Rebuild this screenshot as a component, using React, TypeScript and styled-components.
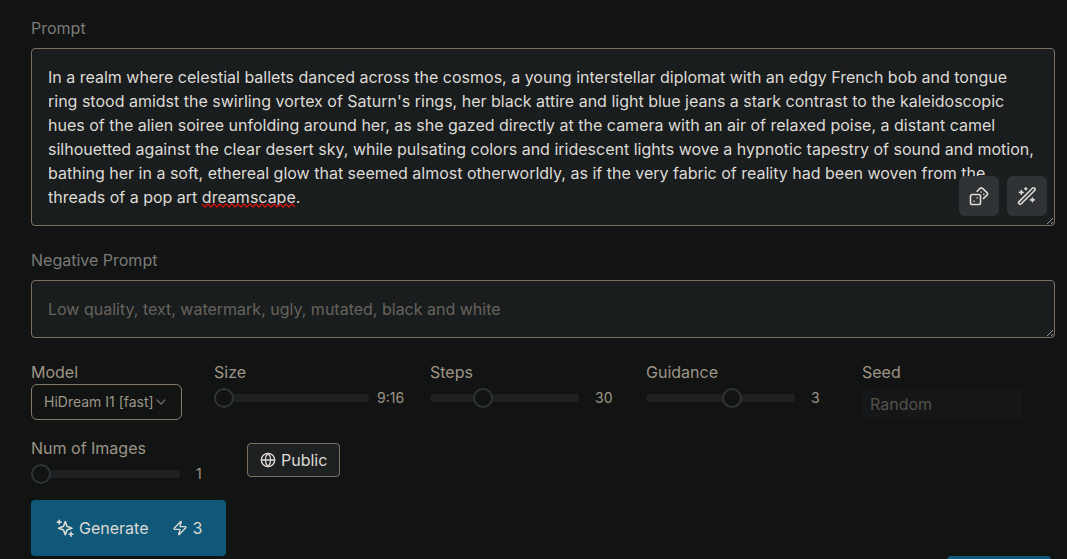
import React, { useState } from 'react';
import styled, { createGlobalStyle } from 'styled-components';
import { ChevronDown, Globe, Zap } from 'lucide-react';

const GlobalStyle = createGlobalStyle`
  *, *::before, *::after { box-sizing: border-box; }
  body {
    margin: 0;
    background: #111413;
    color: #9d9487;
    font-family: Inter, "Liberation Sans", sans-serif;
    font-size: 16px;
    line-height: 24px;
  }
  button, input, textarea, select { font: inherit; color: inherit; margin: 0; }
`;

const Form = styled.form`
  display: flex;
  flex-direction: column;
  padding: 16px 12px 3px 31px;
`;

const Field = styled.div`
  display: flex;
  flex-direction: column;
  margin-bottom: 22px;
`;

const FieldLabel = styled.label`
  color: #7b7a77;
  margin-bottom: 8px;
`;

const AreaWrap = styled.div`
  position: relative;
  display: flex;
`;

const Area = styled.textarea`
  flex: 1;
  min-width: 0;
  padding: 16px;
  border: 1px solid #7b7163;
  border-radius: 4px;
  background: #1a1d1e;
  color: #dddad5;
  color-scheme: dark;
  outline: none;
  overflow: hidden;
  resize: vertical;
  &::placeholder { color: #66635d; opacity: 1; }
`;

const Squiggle = styled.svg`
  position: absolute;
  left: 171px;
  top: 155px;
  pointer-events: none;
`;

const AreaTools = styled.div`
  position: absolute;
  right: 8px;
  bottom: 10px;
  display: flex;
  gap: 8px;
`;

const ToolButton = styled.button`
  display: grid;
  place-items: center;
  width: 40px;
  height: 40px;
  padding: 0;
  border: 0;
  border-radius: 6px;
  background: #303336;
  color: #dddad5;
`;

const Controls = styled.div`
  display: flex;
  flex-wrap: wrap;
  align-items: flex-start;
  gap: 16px 32px;
`;

const Control = styled.div<{ $width: number }>`
  display: flex;
  flex-direction: column;
  width: ${(p) => p.$width}px;
`;

const SelectBox = styled.div`
  position: relative;
  display: flex;
  svg {
    position: absolute;
    right: 13px;
    top: 10px;
    color: #6f695f;
    pointer-events: none;
  }
`;

const Select = styled.select`
  appearance: none;
  width: 100%;
  height: 36px;
  padding: 0 12px;
  border: 1px solid #84796a;
  border-radius: 6px;
  background: transparent;
  font-size: 14px;
`;

const SliderRow = styled.div<{ $gap: number }>`
  display: flex;
  align-items: center;
  gap: ${(p) => p.$gap}px;
  height: 20px;
  margin-top: 4px;
  font-size: 14px;
  white-space: nowrap;
`;

const Range = styled.input<{ $width: number }>`
  appearance: none;
  flex: none;
  width: ${(p) => p.$width}px;
  height: 20px;
  background: transparent;
  &::-webkit-slider-runnable-track {
    height: 8px;
    border-radius: 4px;
    background: #1e2122;
  }
  &::-webkit-slider-thumb {
    appearance: none;
    width: 20px;
    height: 20px;
    margin-top: -6px;
    border: 2px solid #2e3437;
    border-radius: 50%;
    background: #111413;
  }
`;

const SeedInput = styled.input`
  width: 100%;
  height: 32px;
  margin-top: 4px;
  padding: 0 8px;
  border: 0;
  background: #141617;
  &::placeholder { color: #55524d; opacity: 1; }
`;

const PublicButton = styled.button`
  display: flex;
  align-items: center;
  align-self: center;
  gap: 5px;
  height: 34px;
  padding: 0 12px;
  border: 1px solid #7b7163;
  border-radius: 4px;
  background: #1e2122;
  color: #dddad5;
`;

const GenerateButton = styled.button`
  display: flex;
  align-items: center;
  align-self: flex-start;
  gap: 24px;
  height: 56px;
  margin-top: 16px;
  padding: 0 24px;
  border: 0;
  border-radius: 4px;
  background: #0f5879;
  color: #dddad5;
`;

const IconText = styled.span`
  display: flex;
  align-items: center;
  gap: 4px;
`;

const FloatingButton = styled.button`
  position: fixed;
  right: 16px;
  bottom: -37px;
  width: 104px;
  height: 40px;
  border: 0;
  border-radius: 4px;
  background: #0f5879;
`;

const LineIcon = styled.svg.attrs({
  width: 20,
  height: 20,
  viewBox: '0 0 20 20',
  fill: 'none',
  stroke: 'currentColor',
  strokeLinecap: 'round',
  strokeLinejoin: 'round',
  'aria-hidden': true,
})`
  stroke-width: 1.6;
`;

const DiceIcon = () => (
  <LineIcon>
    <rect x="1.5" y="8.5" width="10" height="10" rx="1.8" />
    <path d="M8.2 5.2 L11 2.4 a1.8 1.8 0 0 1 2.5 0 L18 6.6 a1.8 1.8 0 0 1 0 2.5 L14.6 12.4" />
    <path d="M5 15.2h.01M8.2 12h.01M12.2 6h.01M14.8 8.4h.01" />
  </LineIcon>
);

const WandIcon = () => (
  <LineIcon>
    <path d="M2.1 15.6 L15.4 2.3 a1.5 1.5 0 0 1 2.2 2.2 L4.3 17.8 a1.5 1.5 0 0 1 -2.2 -2.2 Z" />
    <path d="M4.3 4.6v3.6M2.5 6.4h3.6M15.4 12v3.8M13.5 13.9h3.8M8.8 1.7v2M7.8 2.7h2" />
  </LineIcon>
);

const SparkleIcon = () => (
  <LineIcon>
    <path d="M10.3 3.6 L11.8 7.9 Q12 8.4 12.5 8.6 L17 10.2 L12.5 11.8 Q12 12 11.8 12.5 L10.3 16.8 L8.7 12.5 Q8.5 12 8 11.8 L3.5 10.2 L8 8.6 Q8.5 8.4 8.7 7.9 Z" />
    <path d="M4.2 2.2v3.8M2.3 4.1h3.8M16 14.4v3.8M14.1 16.3h3.8" />
  </LineIcon>
);

const PROMPT =
  "In a realm where celestial ballets danced across the cosmos, a young interstellar diplomat with an edgy French bob and tongue ring stood amidst the swirling vortex of Saturn's rings, her black attire and light blue jeans a stark contrast to the kaleidoscopic hues of the alien soiree unfolding around her, as she gazed directly at the camera with an air of relaxed poise, a distant camel silhouetted against the clear desert sky, while pulsating colors and iridescent lights wove a hypnotic tapestry of sound and motion, bathing her in a soft, ethereal glow that seemed almost otherworldly, as if the very fabric of reality had been woven from the threads of a pop art dreamscape.";

const SIZES = ['9:16', '2:3', '1:1', '3:2', '16:9'];

const squigglePoints = Array.from({ length: 32 }, (_, i) => `${i * 3},${i % 2 ? 4 : 1}`).join(' ');

type SliderProps = {
  id: string;
  label: string;
  min: number;
  max: number;
  step?: number;
  initial: number;
  width?: number;
  gap?: number;
  format?: (value: number) => string;
};

function Slider({ id, label, min, max, step = 1, initial, width = 149, gap = 16, format = String }: SliderProps) {
  const [value, setValue] = useState(initial);
  return (
    <Control $width={184}>
      <label htmlFor={id}>{label}</label>
      <SliderRow $gap={gap}>
        <Range
          id={id}
          type="range"
          min={min}
          max={max}
          step={step}
          value={value}
          $width={width}
          onChange={(e) => setValue(Number(e.target.value))}
        />
        <output htmlFor={id}>{format(value)}</output>
      </SliderRow>
    </Control>
  );
}

export default function App() {
  return (
    <>
      <GlobalStyle />
      <Form onSubmit={(e) => e.preventDefault()}>
        <Field>
          <FieldLabel htmlFor="prompt">Prompt</FieldLabel>
          <AreaWrap>
            <Area id="prompt" rows={6} defaultValue={PROMPT} spellCheck={false} />
            <Squiggle width="94" height="5" aria-hidden="true">
              <polyline points={squigglePoints} fill="none" stroke="#d01010" strokeWidth="1.3" />
            </Squiggle>
            <AreaTools>
              <ToolButton type="button" aria-label="Random prompt"><DiceIcon /></ToolButton>
              <ToolButton type="button" aria-label="Enhance prompt"><WandIcon /></ToolButton>
            </AreaTools>
          </AreaWrap>
        </Field>
        <Field>
          <FieldLabel htmlFor="negative">Negative Prompt</FieldLabel>
          <AreaWrap>
            <Area id="negative" rows={1} placeholder="Low quality, text, watermark, ugly, mutated, black and white" />
          </AreaWrap>
        </Field>
        <Controls>
          <Control $width={151}>
            <label htmlFor="model">Model</label>
            <SelectBox>
              <Select id="model">
                <option>HiDream I1 [fast]</option>
              </Select>
              <ChevronDown size={16} />
            </SelectBox>
          </Control>
          <Slider id="size" label="Size" min={0} max={4} initial={0} width={155} gap={8} format={(v) => SIZES[v]} />
          <Slider id="steps" label="Steps" min={15} max={60} initial={30} />
          <Slider id="guidance" label="Guidance" min={0} max={5.1} step={0.1} initial={3} />
          <Control $width={160}>
            <label htmlFor="seed">Seed</label>
            <SeedInput id="seed" type="text" placeholder="Random" />
          </Control>
          <Slider id="count" label="Num of Images" min={1} max={4} initial={1} />
          <PublicButton type="button"><Globe size={16} />Public</PublicButton>
        </Controls>
        <GenerateButton type="submit">
          <IconText><SparkleIcon />Generate</IconText>
          <IconText><Zap size={16} />3</IconText>
        </GenerateButton>
      </Form>
      <FloatingButton type="button" aria-label="Open panel" />
    </>
  );
}
